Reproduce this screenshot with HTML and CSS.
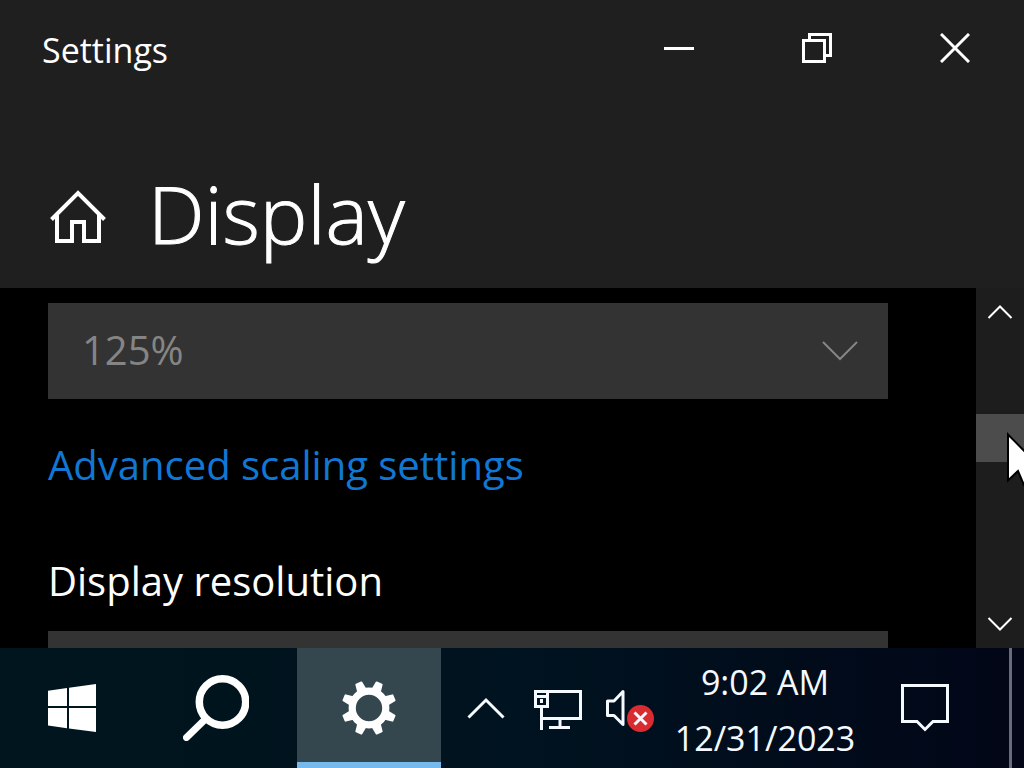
FILE: index.html
```html
<!DOCTYPE html>
<html lang="en">
<head>
<meta charset="utf-8">
<title>Settings</title>
<link rel="stylesheet" href="styles.css">
</head>
<body>
<div class="desktop">
  <header class="window-header">
    <div class="titlebar">
      <span class="window-title">Settings</span>
      <div class="window-controls">
        <button class="control" type="button" aria-label="Minimize">
          <svg width="30" height="30" viewBox="0 0 30 30"><path d="M0 15.500h30" /></svg>
        </button>
        <button class="control" type="button" aria-label="Restore">
          <svg width="30" height="30" viewBox="0 0 30 30"><path d="M1.500 7.500h21v21h-21zM7.500 7.500v-6h21v21h-6" /></svg>
        </button>
        <button class="control" type="button" aria-label="Close">
          <svg width="30" height="30" viewBox="0 0 30 30"><path d="M1 1l28 28M29 1L1 29" /></svg>
        </button>
      </div>
    </div>
    <div class="page-heading">
      <button class="home" type="button" aria-label="Home">
        <svg width="56" height="54" viewBox="0 0 56 54"><path d="M1.500 29.500L28 3l26.500 26.500M7 25v26h15V32h12v19h15V25" /></svg>
      </button>
      <h1>Display</h1>
    </div>
  </header>

  <div class="window-body">
    <main class="settings">
      <div class="select-box disabled">
        <select aria-label="Scale" disabled><option>125%</option></select>
        <svg class="select-arrow" width="36" height="20" viewBox="0 0 36 20"><path d="M1 1l17 17L35 1" /></svg>
      </div>
      <a class="link" href="#">Advanced scaling settings</a>
      <label class="field-label" for="resolution">Display resolution</label>
      <div class="select-box">
        <select id="resolution"></select>
      </div>
    </main>
    <div class="scrollbar">
      <button class="scroll-button" type="button" aria-label="Scroll up">
        <svg width="26" height="14" viewBox="0 0 26 14"><path d="M1.500 13L13 1.500 24.500 13" /></svg>
      </button>
      <div class="track">
        <div class="thumb">
          <svg class="cursor" width="17" height="54" viewBox="0 0 17 54"><path d="M1 2.500v46l10-9.500 6 14h20v-14z" /></svg>
        </div>
      </div>
      <button class="scroll-button" type="button" aria-label="Scroll down">
        <svg width="26" height="14" viewBox="0 0 26 14"><path d="M1.500 1L13 12.500 24.500 1" /></svg>
      </button>
    </div>
  </div>

  <footer class="taskbar">
    <div class="apps">
      <button class="app" type="button" aria-label="Start">
        <svg class="solid" width="48" height="48" viewBox="0 0 48 48"><path d="M0 6.700L19 4v18H0zM21 3.700L48 0v22H21zM0 24h19v20.300L0 41.600zM21 24h27v24l-27-3.600z" /></svg>
      </button>
      <button class="app" type="button" aria-label="Search">
        <svg width="66" height="66" viewBox="0 0 66 66"><circle cx="39.500" cy="27" r="23.200" stroke-width="7.500" /><path d="M22 44.500L3.500 62.500" stroke-width="7" stroke-linecap="round" /></svg>
      </button>
      <button class="app active" type="button" aria-label="Settings">
        <svg width="54" height="54" viewBox="-27 -27 54 54">
          <circle r="16.800" stroke-width="7.200" />
          <g class="solid" transform="rotate(22.500)">
            <path id="tooth" d="M-5 -18L-3.700 -26.500Q-3.700 -27.500 -2.700 -27.500H2.700Q3.700 -27.500 3.700 -26.500L5 -18z" />
            <use href="#tooth" transform="rotate(45)" /><use href="#tooth" transform="rotate(90)" /><use href="#tooth" transform="rotate(135)" /><use href="#tooth" transform="rotate(180)" /><use href="#tooth" transform="rotate(225)" /><use href="#tooth" transform="rotate(270)" /><use href="#tooth" transform="rotate(315)" />
          </g>
        </svg>
      </button>
    </div>
    <div class="tray">
      <button class="tray-button" type="button" aria-label="Show hidden icons">
        <svg width="38" height="22" viewBox="0 0 38 22"><path d="M1.500 20.500L19 3l17.500 17.500" /></svg>
      </button>
      <button class="tray-button" type="button" aria-label="Network">
        <svg width="48" height="44" viewBox="0 -4 48 44"><path d="M13 1.500h33.500v27H9M1.500 1.500H13.500v15H1.500zM1.500 6.500H13M7.500 9v4M7.500 17v23M26 28v8M15 37.500h21" /></svg>
      </button>
      <button class="tray-button" type="button" aria-label="Volume muted">
        <svg width="48" height="48" viewBox="0 0 48 48"><path stroke-linejoin="round" d="M1.500 17h6.500L17 7.500v33L8 31.500h-6.500z" /><circle class="alert" cx="34.500" cy="34.500" r="13.500" /><path d="M28.500 28.500l12 12M40.500 28.500l-12 12" /></svg>
      </button>
      <button class="clock" type="button"><span>9:02 AM</span><span>12/31/2023</span></button>
      <button class="notifications" type="button" aria-label="Notifications">
        <svg width="48" height="48" viewBox="0 0 48 48"><path d="M1.500 1.500h45v36H32l-8 8-8-8H1.500z" /></svg>
      </button>
      <button class="show-desktop" type="button" aria-label="Show desktop"></button>
    </div>
  </footer>
</div>
</body>
</html>
```
FILE: styles.css
```css
* { box-sizing: border-box; }

body {
  margin: 0;
  background: #000;
  color: #fff;
  font-family: "Segoe UI", "Open Sans", "Noto Sans", sans-serif;
}

button {
  display: flex;
  align-items: center;
  justify-content: center;
  margin: 0;
  padding: 0;
  border: 0;
  background: none;
  color: inherit;
  font: inherit;
}

svg {
  display: block;
  fill: none;
  stroke: currentColor;
  stroke-width: 3;
}

.solid { fill: currentColor; stroke: none; }

.desktop {
  display: flex;
  flex-direction: column;
  height: 100vh;
  overflow: hidden;
}

.window-header { background: #1f1f1f; }

.titlebar {
  display: flex;
  align-items: center;
  justify-content: space-between;
  height: 96px;
  padding-left: 42px;
}

.window-title { font-size: 34px; line-height: 40px; padding-top: 4px; }

.window-controls { display: flex; align-self: stretch; }

.control { width: 138px; }

.page-heading {
  display: flex;
  align-items: center;
  gap: 42px;
  height: 192px;
  padding: 50px 50px 0;
}

.home svg { stroke-width: 4; }

h1 {
  margin: 0;
  padding-bottom: 8px;
  font-size: 80px;
  font-weight: 300;
  line-height: 100px;
  -webkit-text-stroke: 1px currentColor;
}

.window-body {
  display: flex;
  flex: 1;
  min-height: 0;
}

.settings {
  display: flex;
  flex: 1;
  flex-direction: column;
  align-items: flex-start;
  min-width: 0;
  overflow: hidden;
  padding: 15px 88px 0 48px;
}

.select-box {
  position: relative;
  flex: none;
  width: 100%;
  color: #fff;
}

.disabled { color: #858585; }

select {
  display: block;
  width: 100%;
  height: 96px;
  padding: 0 34px 4px;
  appearance: none;
  border: 0;
  border-radius: 0;
  background: #333;
  color: inherit;
  opacity: 1;
  font: inherit;
  font-size: 40px;
}

.select-arrow {
  position: absolute;
  top: 38px;
  right: 30px;
  stroke-width: 2;
}

.link, .field-label {
  font-size: 40px;
  line-height: 56px;
}

.link {
  margin-top: 38px;
  color: #1078d4;
  text-decoration: none;
}

.field-label { margin: 60px 0 22px; }

.scrollbar {
  display: flex;
  flex-direction: column;
  width: 48px;
  background: #1d1d1d;
}

.scroll-button { height: 48px; }
.scroll-button svg { stroke-width: 2; }

.track {
  display: grid;
  flex: 1;
  grid-template-rows: 78fr 48px 138fr;
}

.thumb {
  position: relative;
  grid-row: 2;
  background: #4c4c4c;
}

.cursor {
  position: absolute;
  top: 18px;
  right: 0;
  fill: #fff;
  stroke: #000;
  stroke-width: 2;
}

.taskbar {
  display: flex;
  justify-content: space-between;
  height: 120px;
  background: linear-gradient(90deg, #00151d, #001320 50%, #020617);
}

.apps, .tray { display: flex; }

.app { width: 144px; }

.active {
  margin-left: 9px;
  border-top: 6px solid transparent;
  border-bottom: 6px solid #76b9ed;
  background: #34474f;
}

.tray { color: #f4faff; }

.tray-button { width: 72px; }

.clock {
  flex-direction: column;
  width: 198px;
  padding-top: 4px;
  font-size: 34px;
  line-height: 56px;
}

.notifications { width: 122px; }

.show-desktop {
  width: 15px;
  margin-left: 23px;
  border-left: 3px solid #686b78;
}

.alert { fill: #d92b30; stroke: none; }
```
